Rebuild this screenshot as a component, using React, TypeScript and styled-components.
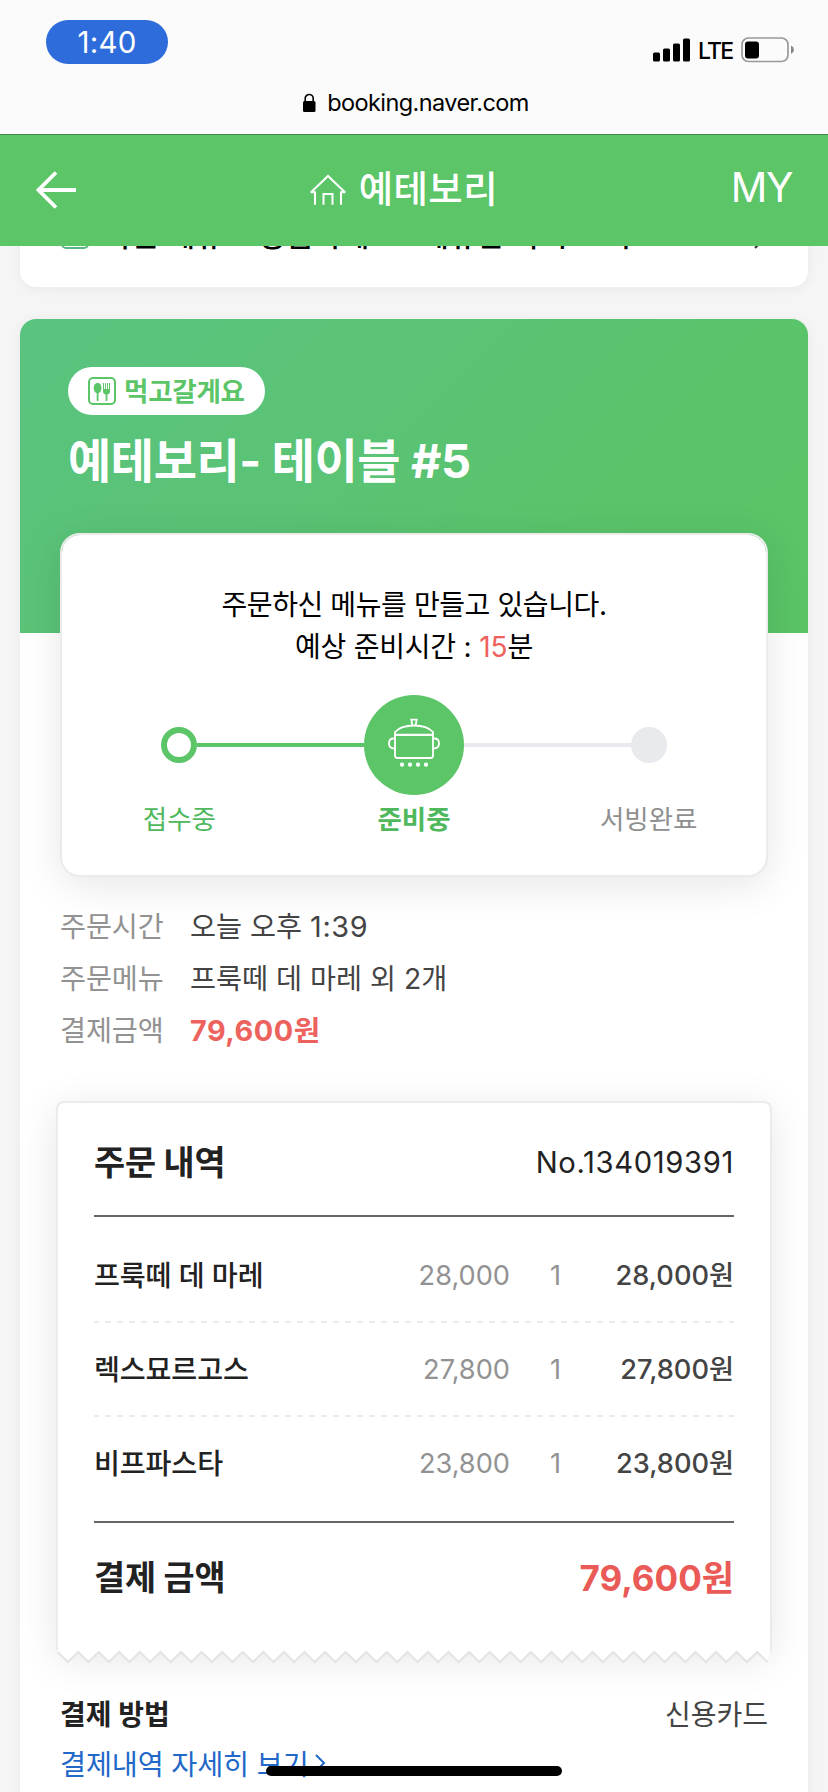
import React from 'react';
import styled, { createGlobalStyle } from 'styled-components';

const GREEN = '#5bc568';

const GlobalStyle = createGlobalStyle`
  * { box-sizing: border-box; }
  body {
    margin: 0;
    background: #f5f5f5;
    font-family: Inter, "Noto Sans CJK KR", sans-serif;
  }
`;

const Screen = styled.div`
  position: relative;
  width: 828px;
  height: 1792px;
  overflow: hidden;
  display: flex;
  flex-direction: column;
`;

interface TextProps {
  $size: number;
  $color?: string;
  $weight?: number;
  $track?: number;
}

const Text = styled.span<TextProps>`
  font-size: ${p => p.$size}px;
  color: ${p => p.$color ?? 'inherit'};
  font-weight: ${p => p.$weight ?? 400};
  letter-spacing: ${p => p.$track ?? 0}px;
  white-space: pre;
`;

const BrowserChrome = styled.div`
  height: 135px;
  flex: none;
  background: #fbfbfb;
  border-bottom: 1px solid #3f8a4b;
`;

const StatusBar = styled.div`
  height: 74px;
  display: flex;
  justify-content: space-between;
  padding: 20px 33px 0 46px;
`;

const ClockPill = styled.div`
  width: 122px;
  height: 44px;
  border-radius: 22px;
  background: #2f6cdb;
  display: flex;
  align-items: center;
  justify-content: center;
  line-height: 44px;
`;

const Signals = styled.div`
  display: flex;
  align-items: center;
  gap: 7px;
  height: 60px;
  line-height: 60px;
`;

const Carrier = styled.div`
  width: 36px;
  padding-top: 3px;
`;

const UrlBar = styled.div`
  display: flex;
  align-items: center;
  justify-content: center;
  gap: 11px;
  height: 58px;
  padding-left: 4px;
  line-height: 58px;
`;

const Header = styled.header`
  flex: none;
  height: 111px;
  background: ${GREEN};
  color: #fff;
  display: flex;
  align-items: center;
  justify-content: space-between;
  padding: 0 36px 1px;
  line-height: 60px;
`;

const HeaderTitle = styled.div`
  display: flex;
  align-items: center;
  gap: 13px;
  padding-bottom: 1px;
`;

const HeaderAction = styled.div`
  margin-top: 3px;
`;

const Content = styled.main`
  flex: 1;
  overflow: hidden;
  padding: 0 20px;
`;

const Card = styled.section`
  background: #fff;
  border-radius: 16px;
  box-shadow: 0 2px 14px rgba(0, 0, 0, 0.05);
`;

const MenuLink = styled(Card)`
  display: flex;
  align-items: center;
  height: 114px;
  margin-top: -73px;
  padding: 18px 42px 8px 41px;
  line-height: 40px;

  > svg:last-child {
    margin-top: 8px;
  }
`;

const MenuLinkText = styled.div`
  flex: 1;
  margin-left: 15px;
  padding-top: 5px;
`;

const OrderCard = styled(Card)`
  margin-top: 32px;
  height: 1500px;
`;

const Hero = styled.div`
  height: 314px;
  padding: 48px 48px 0;
  border-radius: 16px 16px 0 0;
  background: linear-gradient(135deg, #5ac37f 0%, #5ac374 45%, #5ac46a 70%, #5ac465 100%);
  color: #fff;
`;

const Badge = styled.div`
  display: flex;
  align-items: center;
  width: 197px;
  height: 48px;
  padding-left: 20px;
  gap: 8px;
  border-radius: 24px;
  background: #fff;
  line-height: 48px;
`;

const HeroTitle = styled.h1`
  margin: 16px 0 0;
  line-height: 60px;
  font-size: 0;
`;

const StatusPanel = styled.div`
  position: relative;
  width: 708px;
  height: 344px;
  margin: -100px auto 0;
  padding-top: 49px;
  border: 2px solid #ebebeb;
  border-radius: 20px;
  background: #fff;
  background-clip: padding-box;
  box-shadow: 0 8px 40px rgba(0, 0, 0, 0.1);
  text-align: center;
`;

const Message = styled.div`
  line-height: 42px;
  height: 42px;
`;

const Track = styled.div`
  display: flex;
  align-items: center;
  width: 506px;
  height: 100px;
  margin: 27px auto 0;
`;

const Dot = styled.div<{ $done?: boolean }>`
  width: 36px;
  height: 36px;
  border-radius: 50%;
  border: 6px solid ${p => (p.$done ? GREEN : '#e9eaee')};
  background: ${p => (p.$done ? '#fff' : '#e9eaee')};
`;

const Line = styled.div<{ $done?: boolean }>`
  flex: 1;
  height: 4px;
  background: ${p => (p.$done ? GREEN : '#e9eaee')};
`;

const CurrentStep = styled.div`
  width: 100px;
  height: 100px;
  border-radius: 50%;
  background: ${GREEN};
  display: flex;
  align-items: center;
  justify-content: center;
`;

const StepLabels = styled.div`
  display: grid;
  grid-template-columns: repeat(3, 1fr);
  margin-top: 10px;
  line-height: 28px;
`;

const InfoList = styled.div`
  padding: 24px 40px 0;
`;

const InfoRow = styled.div`
  display: grid;
  grid-template-columns: 130px 1fr;
  line-height: 52px;
  height: 52px;
`;

const Receipt = styled.div`
  width: 716px;
  height: 550px;
  margin: 44px auto 0;
  padding: 0 36px;
  border: 2px solid #ebebeb;
  border-bottom: 0;
  border-radius: 8px 8px 0 0;
  background: #fff;
  box-shadow: 0 8px 40px rgba(0, 0, 0, 0.1);
`;

const ReceiptHead = styled.div`
  display: flex;
  align-items: center;
  justify-content: space-between;
  height: 114px;
  padding-top: 7px;
  line-height: 50px;
  border-bottom: 2px solid #666;
`;

const Items = styled.div`
  padding: 12px 0 10px;
  border-bottom: 2px solid #666;
`;

const ItemRow = styled.div<{ $last?: boolean }>`
  display: grid;
  grid-template-columns: 1fr 100px 51px 173px;
  align-items: center;
  height: 94px;
  padding-bottom: 1px;
  line-height: 92px;
  text-align: right;
  background: ${p =>
    p.$last
      ? 'none'
      : 'repeating-linear-gradient(90deg, #e9eaee 0 5px, transparent 5px 11px, #e9eaee 11px 12px) 0 100% / 100% 2px no-repeat'};

  > :first-child {
    text-align: left;
  }
`;

const TotalRow = styled.div`
  display: flex;
  justify-content: space-between;
  height: 110px;
  line-height: 110px;
`;

const TornEdge = styled.svg`
  display: block;
  width: 716px;
  height: 14px;
  margin: -1px auto 0;
  position: relative;
`;

const Payment = styled.div`
  display: flex;
  justify-content: space-between;
  padding: 0 40px;
  margin-top: 26px;
  line-height: 50px;
`;

const DetailLink = styled.div`
  display: flex;
  align-items: center;
  gap: 6px;
  padding-left: 40px;
  line-height: 50px;

  svg {
    margin-bottom: 5px;
  }
`;

const HomeIndicator = styled.div`
  position: absolute;
  left: 266px;
  top: 1766px;
  width: 296px;
  height: 10px;
  border-radius: 5px;
  background: #000;
`;

const ForkIcon = ({ color = GREEN }: { color?: string }) => (
  <svg width="28" height="28" viewBox="0 0 28 28" fill="none">
    <rect x="1" y="1" width="26" height="26" rx="4" stroke={color} strokeWidth="2" />
    <ellipse cx="9.6" cy="11" rx="3.9" ry="5.2" fill={color} />
    <path d="M9.6 15v8.2" stroke={color} strokeWidth="1.8" strokeLinecap="round" />
    <path d="M15 6v8.5q0 3 3.5 3t3.5-3V6h-1v6h-1V6h-0.9v6h-1.2V6h-0.9v6h-1V6z" fill={color} />
    <path d="M18.5 16v7.2" stroke={color} strokeWidth="1.8" strokeLinecap="round" />
  </svg>
);

const PotIcon = () => (
  <svg width="56" height="56" viewBox="0 0 56 56" fill="none" stroke="#fff" strokeWidth="1.8">
    <path d="M26.3 8 25.3 2.7h5.4L29.7 8" />
    <path d="M9 18v-3Q15 8.500 28 8.500t19 6.500v3" />
    <path d="M9 17V38.500q0 2.500 2.500 2.500h33q2.500 0 2.500-2.500V17" />
    <path d="M9 17.8h38" strokeWidth="2.2" />
    <path d="M9 21.500H7.500Q3 21.500 3 26.500T8.500 31.500M47 21.500h1.500Q53 21.500 53 26.500T47.500 31.500" />
    <g fill="#fff" stroke="none">
      <circle cx="16" cy="47.7" r="2.1" />
      <circle cx="24" cy="47.7" r="2.1" />
      <circle cx="32" cy="47.7" r="2.1" />
      <circle cx="40" cy="47.7" r="2.1" />
    </g>
  </svg>
);

const TEETH = 35;
const PERIOD = 20.58;
const tornPoints = Array.from({ length: TEETH }, (_, i) => {
  const x = 1.5 + i * PERIOD;
  return `${x.toFixed(1)},2 ${(x + PERIOD / 2).toFixed(1)},12`;
}).join(' ');

const items = [
  { name: '프룩떼 데 마레', price: '28,000', qty: '1', total: '28,000' },
  { name: '렉스묘르고스', price: '27,800', qty: '1', total: '27,800' },
  { name: '비프파스타', price: '23,800', qty: '1', total: '23,800' },
];

export default function App() {
  return (
    <Screen>
      <GlobalStyle />
      <BrowserChrome>
        <StatusBar>
          <ClockPill>
            <Text $size={29.5} $color="#fff" $track={0.2}>1:40</Text>
          </ClockPill>
          <Signals>
            <svg width="38" height="24" viewBox="0 0 38 24">
              <rect x="0" y="14.5" width="7" height="9" rx="1.5" />
              <rect x="10" y="10.5" width="7" height="13" rx="1.5" />
              <rect x="20" y="5.5" width="7" height="18" rx="1.5" />
              <rect x="30" y="0.5" width="7" height="23" rx="1.5" />
            </svg>
            <Carrier>
              <Text $size={23} $weight={500} $track={-1.8}>LTE</Text>
            </Carrier>
            <svg width="54" height="26" viewBox="0 0 54 26">
              <rect x="1" y="1" width="46" height="23.5" rx="6.5" fill="none" stroke="#999" strokeWidth="1.7" />
              <rect x="4" y="4.5" width="14" height="17" rx="3" />
              <path d="M50 8.500q3 1.500 3 4.300t-3 4.300z" fill="#888" />
            </svg>
          </Signals>
        </StatusBar>
        <UrlBar>
          <svg width="13" height="20" viewBox="0 0 13 20">
            <rect x="0" y="8" width="12.5" height="11" rx="1.5" />
            <path d="M2.2 9V5.500a4 4 0 0 1 8 0V9" fill="none" stroke="#000" strokeWidth="1.6" />
          </svg>
          <Text $size={23.5} $track={-0.6}>booking.naver.com</Text>
        </UrlBar>
      </BrowserChrome>

      <Header>
        <svg width="41" height="38" viewBox="0 0 41 38" fill="none" stroke="#fff" strokeWidth="3.8">
          <path d="M20 1.500 2.500 19 20 36.500M2 19h38" />
        </svg>
        <HeaderTitle>
          <svg width="36" height="32" viewBox="0 0 36 32" fill="none" stroke="#fff" strokeWidth="2">
            <path d="M0.800 18.500 18 2l17.200 16.500M0.500 18.200H5v12.500M35.500 18.200H31v12.500M13.500 30.700V20h9v10.700" />
          </svg>
          <Text $size={37.4} $weight={500} $track={0.4}>예테보리</Text>
        </HeaderTitle>
        <HeaderAction>
          <Text $size={40.5} $track={-1.4}>MY</Text>
        </HeaderAction>
      </Header>

      <Content>
        <MenuLink>
          <ForkIcon color="#55b583" />
          <MenuLinkText>
            <Text $size={30} $weight={500} $color="#000" $track={0.1}>다른 메뉴도 궁금하세요? 메뉴판 다시 보기</Text>
          </MenuLinkText>
          <svg width="12" height="20" viewBox="0 0 12 20" fill="none" stroke="#333" strokeWidth="2">
            <path d="m1 1 9 9-9 9" />
          </svg>
        </MenuLink>

        <OrderCard>
          <Hero>
            <Badge>
              <ForkIcon />
              <Text $size={26.5} $weight={700} $color={GREEN} $track={-0.25}>먹고갈게요</Text>
            </Badge>
            <HeroTitle>
              <Text $size={47} $weight={700} $track={-0.4}>예테보리- 테이블 #5</Text>
            </HeroTitle>
          </Hero>

          <StatusPanel>
            <Message><Text $size={28} $track={-0.4}>주문하신 메뉴를 만들고 있습니다.</Text></Message>
            <Message>
              <Text $size={28} $track={-0.2}>예상 준비시간 : <Text $size={28} $color="#ee625e">15</Text>분</Text>
            </Message>
            <Track>
              <Dot $done />
              <Line $done />
              <CurrentStep><PotIcon /></CurrentStep>
              <Line />
              <Dot />
            </Track>
            <StepLabels>
              <Text $size={26.5} $color="#4fb85c">접수중</Text>
              <Text $size={26.5} $weight={700} $color="#4fb85c">준비중</Text>
              <Text $size={26.5} $color="#8f8f8f">서빙완료</Text>
            </StepLabels>
          </StatusPanel>

          <InfoList>
            <InfoRow>
              <Text $size={28.3} $color="#929292" $track={-0.15}>주문시간</Text>
              <Text $size={28.3} $color="#444">오늘 오후 <Text $size={28.8} $track={0.6}>1:39</Text></Text>
            </InfoRow>
            <InfoRow>
              <Text $size={28.3} $color="#929292" $track={-0.15}>주문메뉴</Text>
              <Text $size={28.3} $color="#444">프룩떼 데 마레 외 2개</Text>
            </InfoRow>
            <InfoRow>
              <Text $size={28.3} $color="#929292" $track={-0.15}>결제금액</Text>
              <Text $size={28.8} $weight={700} $color="#ee625e" $track={0.5}>79,600원</Text>
            </InfoRow>
          </InfoList>

          <Receipt>
            <ReceiptHead>
              <Text $size={33.8} $weight={700} $color="#222" $track={-0.2}>주문 내역</Text>
              <Text $size={29.2} $color="#222" $track={0.65}>No.134019391</Text>
            </ReceiptHead>
            <Items>
              {items.map((item, i) => (
                <ItemRow key={item.name} $last={i === items.length - 1}>
                  <Text $size={28.2} $weight={500} $color="#222" $track={-0.15}>{item.name}</Text>
                  <Text $size={27.2} $color="#929292">{item.price}</Text>
                  <Text $size={27.2} $color="#929292">{item.qty}</Text>
                  <Text $size={27.2} $weight={500} $color="#444">{item.total}원</Text>
                </ItemRow>
              ))}
            </Items>
            <TotalRow>
              <Text $size={33.8} $weight={700} $color="#222" $track={-0.2}>결제 금액</Text>
              <Text $size={35} $weight={700} $color="#ea5a56">79,600원</Text>
            </TotalRow>
          </Receipt>
          <TornEdge viewBox="0 0 716 14">
            <polygon points={`1,0 ${tornPoints} 714,0`} fill="#fff" />
            <polyline points={tornPoints} fill="none" stroke="#e4e4e4" strokeWidth="2" />
          </TornEdge>

          <Payment>
            <Text $size={28} $weight={700} $color="#222">결제 방법</Text>
            <Text $size={28} $color="#444">신용카드</Text>
          </Payment>
          <DetailLink>
            <Text $size={28.3} $color="#2268c8" $track={-0.15}>결제내역 자세히 보기</Text>
            <svg width="11" height="18" viewBox="0 0 11 18" fill="none" stroke="#2268c8" strokeWidth="2">
              <path d="m1 1 8 8-8 8" />
            </svg>
          </DetailLink>
        </OrderCard>
      </Content>
      <HomeIndicator />
    </Screen>
  );
}
